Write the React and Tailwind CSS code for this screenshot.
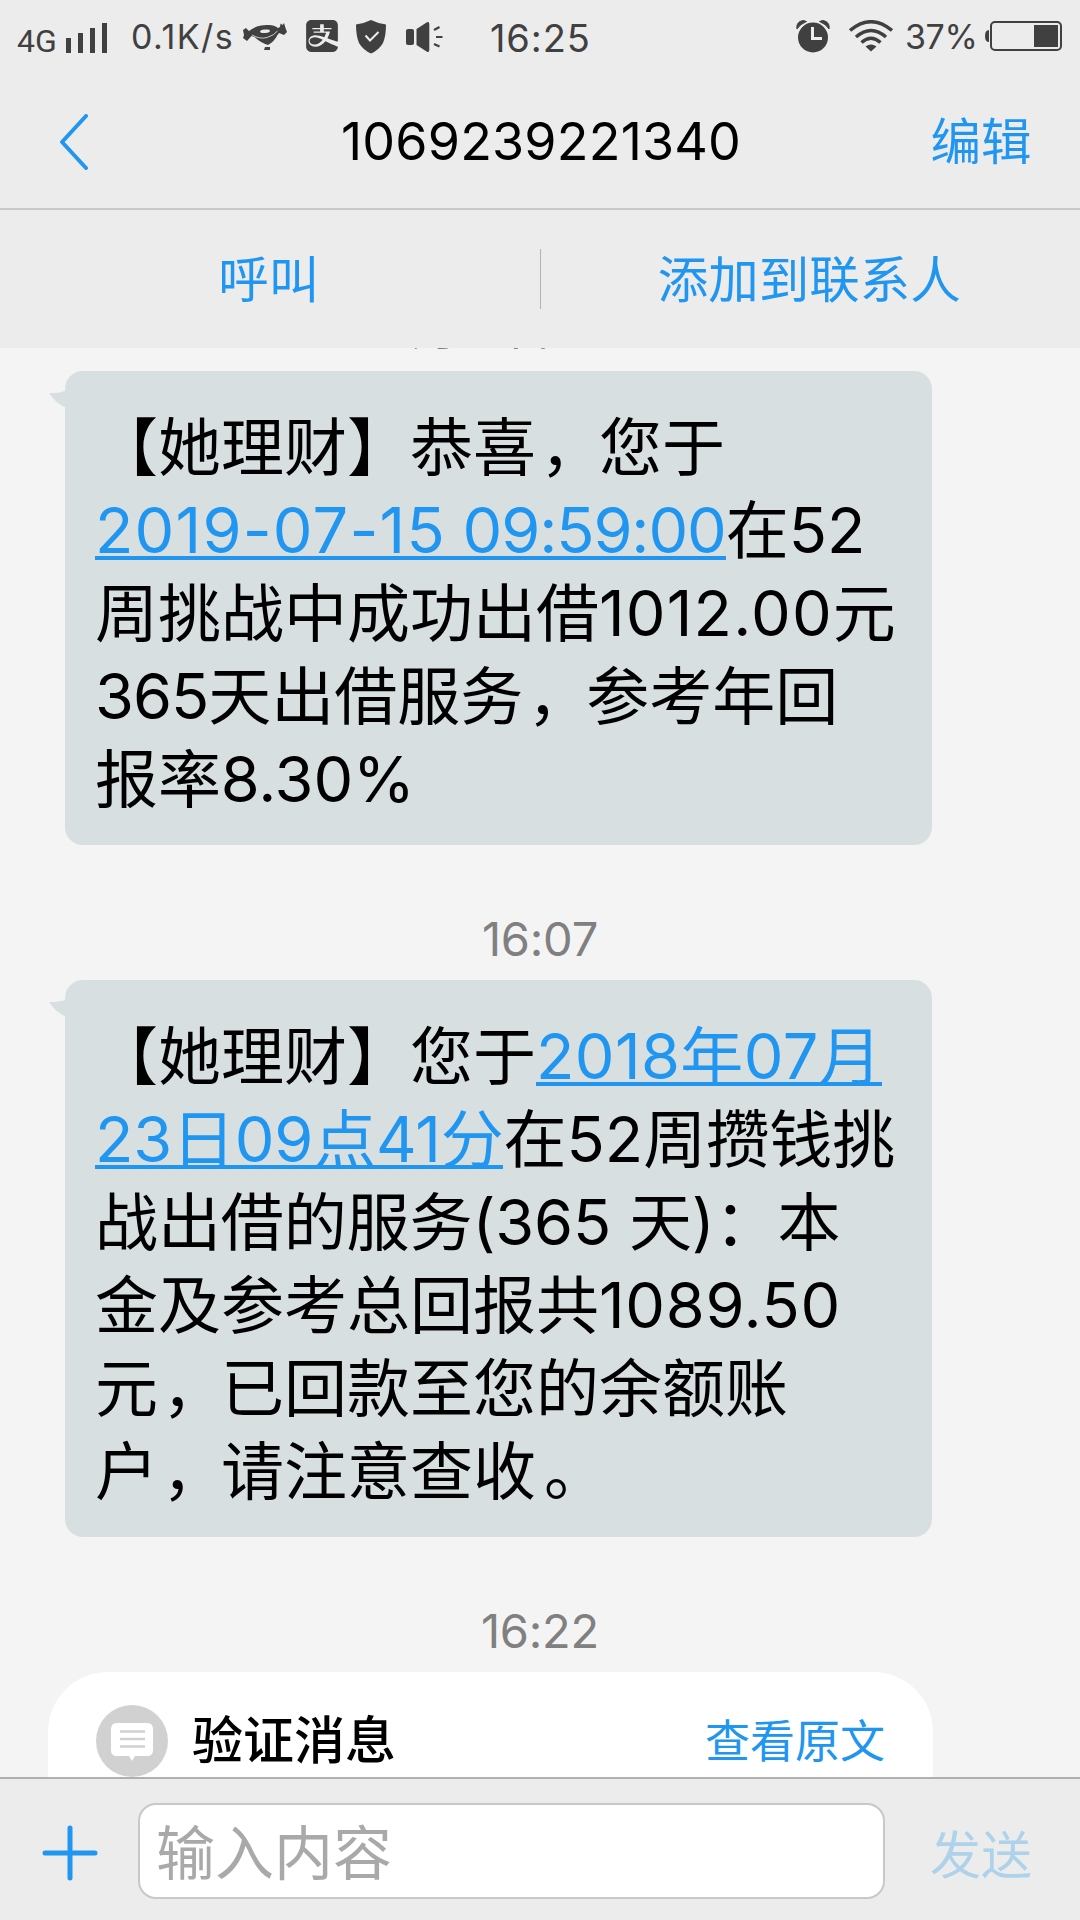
import React, { useState } from 'react';
import { SiAlipay } from 'react-icons/si';

const timeClass = 'flex justify-center items-center text-[47px] leading-[56px] tracking-[-0.2px] text-[#808080] whitespace-pre';
const linkClass = 'text-[#2196f0] border-b-4 border-[#2196f0]';

const messages = [
  {
    id: 1,
    time: '7月15日 09:59',
    lines: [
      [{ text: '【她理财】恭喜，您于' }],
      [
        { text: '2019-07-15', link: true, spacing: 'tracking-[1.2px]' },
        { text: ' 09:59:00', link: true, spacing: 'tracking-[-1.1px]' },
        { text: '在52' },
      ],
      [{ text: '周挑战中成功出借' }, { text: '1012.00', spacing: 'tracking-[1.2px]' }, { text: '元' }],
      [{ text: '365', spacing: 'tracking-[-1px]' }, { text: '天出借服务，参考年回' }],
      [{ text: '报率8.30%', spacing: 'tracking-[-0.1px]' }],
    ],
  },
  {
    id: 2,
    time: '16:07',
    lines: [
      [{ text: '【她理财】您于' }, { text: '2018年07月', link: true, spacing: 'tracking-[0.4px]' }],
      [{ text: '23日09点41分', link: true, spacing: 'tracking-[-0.2px]' }, { text: '在52周攒钱挑' }],
      [{ text: '战出借的服务(365 天)：本', spacing: 'tracking-[-0.1px]' }],
      [{ text: '金及参考总回报共' }, { text: '1089.50', spacing: 'tracking-[0.7px]' }],
      [{ text: '元，已回款至您的余额账' }],
      [{ text: '户，请注意查收。' }],
    ],
  },
];

const StatusBar = () => (
  <div className="flex items-start h-[75px] text-[#404040]">
    <span className="w-[48px] ml-[17px] mt-[22px] text-[32px] leading-[38px] font-['Roboto',sans-serif]">4G</span>
    <div className="flex items-end gap-[7px] mt-[23px] ml-px h-[30px] w-[41px]">
      <div className="w-[5px] h-[15px] bg-[#404040]" />
      <div className="w-[5px] h-[20px] bg-[#404040]" />
      <div className="w-[5px] h-[25px] bg-[#404040]" />
      <div className="w-[5px] h-[30px] bg-[#404040]" />
    </div>
    <span className="w-[112px] ml-[24px] mt-[17px] text-[34px] leading-[40px] tracking-[1.5px]">0.1K/s</span>
    <svg className="w-[44px] h-[28px] mt-[23px]" viewBox="0 0 44 28" fill="#404040">
      <path d="M0 7L3 5L6 8L9 6Q15 2 24 2Q31 1.500 35 5L37 4L37.500 .5L39.500 2L41 0L42.500 5L44 9L41 12L36 10L34.500 12Q31 19 25 22Q18 20 11.500 14L8.500 13L4 18L0 15L1 12Z" />
      <ellipse cx="22" cy="8.300" rx="5" ry="1.700" fill="#ececec" transform="rotate(-6 22 8)" />
      <path d="M9 12Q17 16.500 24 14.500Q31 12.500 34.500 8" fill="none" stroke="#ececec" strokeWidth="0.800" />
      <path d="M22 24H27V27H21Z" />
    </svg>
    <SiAlipay className="w-[32px] h-[32px] mt-[20px] ml-[19px]" />
    <svg className="w-[30px] h-[34px] mt-[20px] ml-[18px]" viewBox="0 0 30 34" fill="#404040">
      <path d="M15 0Q22 3.500 30 4.500Q30 16 27 23Q23 30 15 33.500Q7 30 3 23Q0 16 0 4.500Q8 3.500 15 0Z" />
      <path d="M9.500 15.500L14 20.500L22.500 12" fill="none" stroke="#ececec" strokeWidth="2" />
    </svg>
    <svg className="w-[37px] h-[30px] mt-[22px] ml-[20px]" viewBox="0 0 37 30" fill="#404040">
      <rect x="0" y="7" width="8" height="16" rx="2" />
      <path d="M10.500 7L21 .3Q23.300 -.5 23.300 2V28Q23.300 30.500 21 29.700L10.500 23Z" />
      <path d="M28 8L33.500 5M30 15H36.500M28 22L33.500 24.500" stroke="#404040" strokeWidth="2.200" />
    </svg>
    <span className="w-[110px] ml-[47px] mt-[15px] text-[38px] leading-[46px] tracking-[0.9px]">16:25</span>
    <svg className="w-[34px] h-[33px] mt-[20px] ml-auto" viewBox="0 0 34 33" fill="#404040">
      <circle cx="17" cy="17.500" r="15" />
      <path d="M1 9Q0 4 4 1.500Q7-.5 10.500 1.500Q4 4 1 9ZM33 9Q34 4 30 1.500Q27-.5 23.500 1.500Q30 4 33 9Z" stroke="#404040" strokeWidth="1" />
      <path d="M16.500 7V18.500H26" fill="none" stroke="#ececec" strokeWidth="3" />
    </svg>
    <svg className="w-[44px] h-[32px] mt-[20px] ml-[19px]" viewBox="0 0 44 32" fill="none" stroke="#404040" strokeWidth="3.500">
      <path d="M1 10.500Q22-7 43 10.500M7 17Q22 4 37 17M12.500 22.500Q22 14 31.500 22.500" />
      <path d="M16.500 26.500Q22 22.500 27.500 26.500L22 31.500Z" fill="#404040" stroke="none" />
    </svg>
    <span className="w-[79px] ml-[12px] mt-[17px] text-[34px] leading-[40px] tracking-[-0.4px]">37%</span>
    <svg className="w-[77px] h-[30px] mt-[21px] mr-[18px] ml-px" viewBox="0 0 77 30">
      <path d="M4 9Q0 9 0 15Q0 21 4 21Z" fill="#404040" />
      <rect x="6" y="1" width="70" height="28" rx="4" fill="none" stroke="#404040" strokeWidth="2" />
      <rect x="49" y="4" width="24" height="22" fill="#404040" />
    </svg>
  </div>
);

// commas and full stops sit a little further right in their cell
const renderText = (text) =>
  text.split(/([，。])/).map((piece, i) => {
    if (piece === '，') return <span key={i} className="pl-[4px] -mr-[4px]">{piece}</span>;
    if (piece === '。') return <span key={i} className="pl-[8px] -mr-[8px]">{piece}</span>;
    return piece;
  });

const Bubble = ({ message }) => (
  <div className="relative ml-[65px] w-[867px] rounded-[18px] bg-[#d8dfe1] pl-[30px] pt-[36px] pb-[23px]">
    <svg className="absolute left-[-16px] top-[19px] w-[18px] h-[18px]" viewBox="0 0 18 18">
      <path d="M0 3Q12 3.500 18 0V18Q7 14 0 3Z" fill="#d8dfe1" />
    </svg>
    {message.lines.map((line, index) => (
      <div key={index} className="h-[83px] flex items-center text-[63px] leading-[52px] whitespace-pre text-black">
        {line.map((part, i) => (
          <span key={i} className={`${part.link ? linkClass : 'border-b-4 border-transparent'} ${part.spacing || ''}`}>
            {renderText(part.text)}
          </span>
        ))}
      </div>
    ))}
  </div>
);

const App = () => {
  const [content, setContent] = useState('');

  return (
    <div className="w-[1080px] h-[1920px] flex flex-col overflow-hidden bg-[#f4f4f4] font-['Inter','Noto_Sans_CJK_SC',sans-serif]">
      {/* Header */}
      <div className="bg-[#ececec] shrink-0 h-[348px]">
        <StatusBar />
        <div className="flex items-center justify-between h-[135px] pl-[58px] pr-[48px] border-b-2 border-[#c8c8c8]">
          <svg className="w-[94px] h-[56px]" viewBox="0 0 94 56" fill="none" stroke="#2196f0" strokeWidth="4" strokeLinecap="round" strokeLinejoin="round">
            <path d="M28 2L4 28L28 54" />
          </svg>
          <h1 className="text-[52px] leading-[60px] tracking-[0.2px] text-black">1069239221340</h1>
          <button className="w-[102px] text-[50.5px] leading-[60px] text-[#2196f0] whitespace-nowrap">编辑</button>
        </div>
        <div className="flex items-center h-[138px] pt-[2px] text-[50.5px] text-[#2196f0]">
          <button className="flex-1 leading-[60px] pr-[2px]">呼叫</button>
          <div className="w-px h-[60px] mb-[2px] bg-[#b4b4b4]" />
          <button className="flex-1 leading-[60px] pr-[2px]">添加到联系人</button>
        </div>
      </div>

      {/* Messages */}
      <div className="flex-1 overflow-hidden">
        <div className="-mt-[48px]">
          <div className={timeClass}>{messages[0].time}</div>
        </div>
        <div className="mt-[15px]">
          <Bubble message={messages[0]} />
        </div>
        <div className="h-[135px] pt-[66px]">
          <div className={timeClass}>{messages[1].time}</div>
        </div>
        <Bubble message={messages[1]} />
        <div className="h-[135px] pt-[66px]">
          <div className={timeClass}>16:22</div>
        </div>
        <div className="ml-[48px] w-[885px] h-[200px] rounded-t-[60px] bg-white pl-[48px] pr-[48px] pt-[33px] flex items-start">
          <svg className="w-[72px] h-[72px]" viewBox="0 0 72 72">
            <circle cx="36" cy="36" r="36" fill="#d1d1d1" />
            <path d="M21 18H51Q57 18 57 24V45Q57 51 51 51H39L36 56L33 51H21Q15 51 15 45V24Q15 18 21 18Z" fill="white" />
            <path d="M24 26.500H49M24 34H49M24 41.500H49" stroke="#d1d1d1" strokeWidth="2.500" />
          </svg>
          <span className="ml-[24px] mt-[6px] text-[51px] leading-[60px] font-medium text-black">验证消息</span>
          <span className="ml-auto mt-[7px] text-[45px] leading-[60px] text-[#2196f0]">查看原文</span>
        </div>
      </div>

      {/* Input bar */}
      <div className="shrink-0 h-[143px] flex items-center border-t-2 border-[#b0b0b0] bg-[#ececec] pl-[42px] pr-[48px] pt-[3px]">
        <svg className="w-[56px] h-[56px] mt-[3px]" viewBox="0 0 56 56" stroke="#2196f0" strokeWidth="5" strokeLinecap="round">
          <path d="M28 3V53M3 28H53" />
        </svg>
        <input
          value={content}
          onChange={(e) => setContent(e.target.value)}
          placeholder="输入内容"
          className="ml-[40px] w-[747px] h-[96px] rounded-[18px] border-2 border-[#c8c8c8] bg-white pl-[16px] pt-[5px] text-[59px] placeholder:text-[#a9a9a9] outline-none"
        />
        <button className="ml-auto mt-[10px] text-[51px] leading-[60px] text-[#add2ea]">发送</button>
      </div>
    </div>
  );
};

export default App;
